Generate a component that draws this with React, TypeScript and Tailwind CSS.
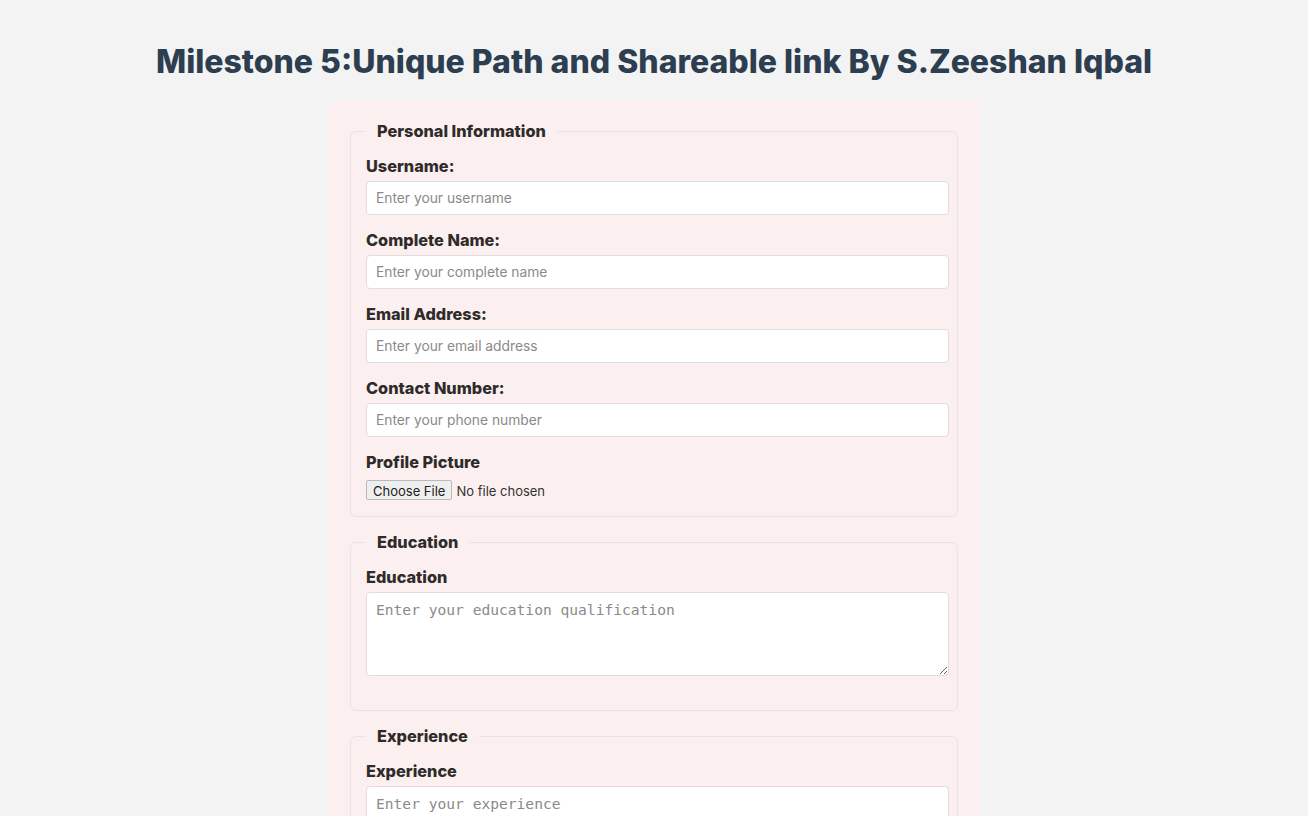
import React from 'react';

const sans = "font-['Inter','Noto_Sans',sans-serif]";

const Field = ({ label, placeholder }: { label: string; placeholder: string }) => {
  return (
    <>
      <label className="block text-[16.3px] leading-5 font-extrabold text-[#2f2b2b] mb-[5px]">{label}</label>
      <input
        type="text"
        placeholder={placeholder}
        className="block w-full h-[34px] mb-[15px] rounded-[4px] border border-[#e2dcdc] bg-white px-[9px] text-[13.8px] text-[#333] placeholder:text-[#8a8a8a] outline-none"
      />
    </>
  );
};

const Area = ({ label, placeholder }: { label: string; placeholder: string }) => {
  return (
    <>
      <label className="block text-[16.3px] leading-5 font-extrabold text-[#2f2b2b] mb-[5px]">{label}</label>
      <textarea
        placeholder={placeholder}
        className="block w-full h-[84px] mb-[34px] rounded-[4px] border border-[#e2dcdc] bg-white px-[9px] py-[7px] text-[14.6px] leading-5 font-['DejaVu_Sans_Mono',monospace] placeholder:text-[#8a8a8a] outline-none"
      />
    </>
  );
};

const Legend = ({ children }: { children: React.ReactNode }) => (
  <legend className="px-[11px] text-[16.3px] leading-5 font-extrabold text-[#2f2b2b]">{children}</legend>
);

const App = () => {
  return (
    <div className={`min-h-screen bg-[#f3f3f3] pt-[44px] ${sans}`}>
      <h1 className="text-center text-[32px] leading-9 font-extrabold text-[#2c3e50]">
        Milestone 5:Unique Path and Shareable link By S.Zeeshan Iqbal
      </h1>
      <form className="mx-auto mt-[20px] w-[652px] rounded-lg bg-[#fbf0ef] px-[22px] pt-[21px] pb-6">
        <fieldset className="mb-[15px] rounded-md border border-[#ebe2e1] pl-[15px] pr-2 pt-[15px]">
          <Legend>Personal Information</Legend>
          <Field label="Username:" placeholder="Enter your username" />
          <Field label="Complete Name:" placeholder="Enter your complete name" />
          <Field label="Email Address:" placeholder="Enter your email address" />
          <Field label="Contact Number:" placeholder="Enter your phone number" />
          <label className="block text-[16.3px] leading-5 font-extrabold text-[#2f2b2b] mb-[8px]">Profile Picture</label>
          <input
            type="file"
            className="block h-5 mb-4 text-[13px] leading-5 text-[#333] file:mr-[4px] file:h-5 file:border file:border-[#b9b9b9] file:bg-[#efefef] file:px-[6px] file:py-0 file:rounded-[2px] file:text-[13px] file:text-[#222]"
          />
        </fieldset>

        <fieldset className="mb-[15px] rounded-md border border-[#ebe2e1] pl-[15px] pr-2 pt-[15px]">
          <Legend>Education</Legend>
          <Area label="Education" placeholder="Enter your education qualification" />
        </fieldset>

        <fieldset className="mb-[15px] rounded-md border border-[#ebe2e1] pl-[15px] pr-2 pt-[15px]">
          <Legend>Experience</Legend>
          <Area label="Experience" placeholder="Enter your experience" />
        </fieldset>
      </form>
    </div>
  );
};

export default App;
